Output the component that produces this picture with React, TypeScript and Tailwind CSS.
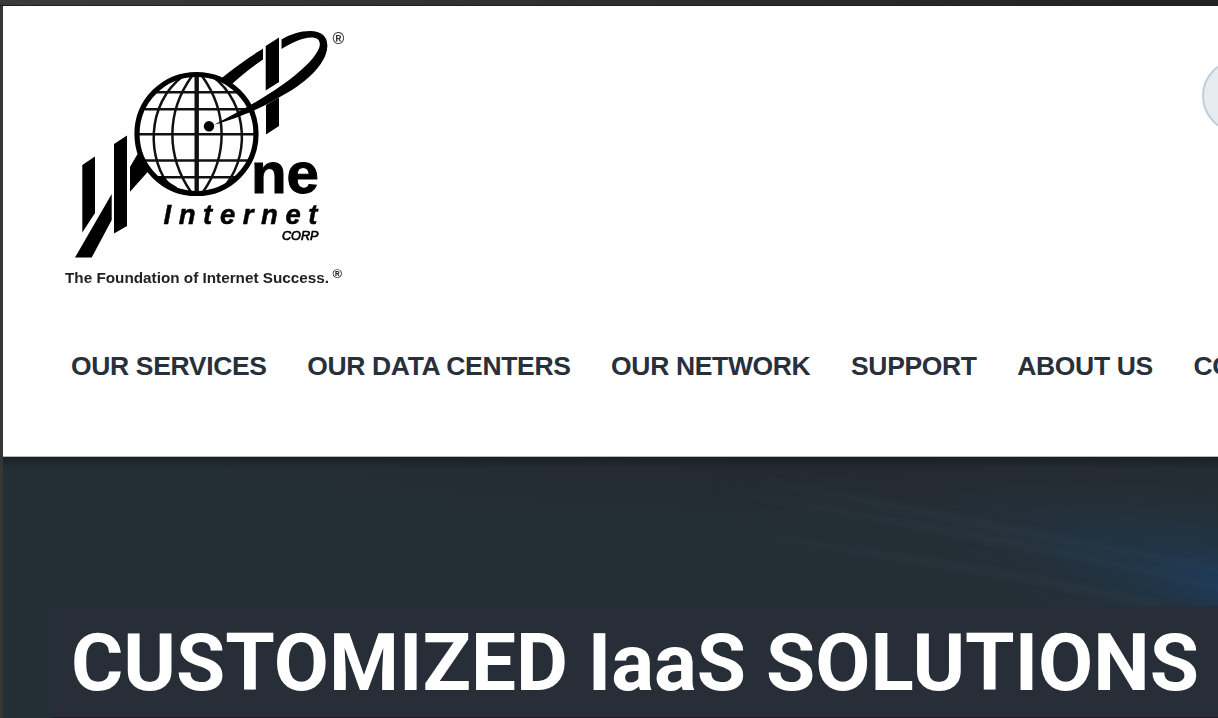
const navItems = [
  "OUR SERVICES",
  "OUR DATA CENTERS",
  "OUR NETWORK",
  "SUPPORT",
  "ABOUT US",
  "CONTACT",
];

function Logo() {
  return (
    <svg
      className="block shrink-0 font-['Liberation_Sans',Arial,sans-serif] blur-[0.7px]"
      width="300"
      height="275"
      viewBox="60 20 300 275"
      role="img"
    >
      <g fill="#000">
        <path d="M82.3 165 95 156.5V213L82.3 232.5Z" />
        <path d="M75 257.5H91.700L111.700 220V194Z" />
        <path d="M114 144 127 135.500V226L114 233.500Z" />
        <path d="M130 167 137.500 154 149 170.500 130 191.700Z" />
      </g>
      <g fill="none" stroke="#111" strokeWidth="2.500">
        <path d="M192 76C166 112 166 156 191 192" />
        <path d="M202 76C228 112 228 156 203 192" />
        <path d="M183 76C146 104 146 160 172 189" />
        <path d="M212 76C250 104 250 160 222 189" />
        <path d="M155 92.300H238M145 109.300H249M136 134.300H257M142 160.500H252M156 177.300H238" />
        <path d="M196.700 74V194" strokeWidth="4.400" />
      </g>
      <circle cx="196.500" cy="134" r="59.500" fill="none" stroke="#000" strokeWidth="5.200" />
      <path d="M156 176C162 182 168 187 177 190L177 187C171 184 166 180 164 176Z" />
      <circle cx="209" cy="126.300" r="5.200" />
      <path d="M265.700 46 279 37.500V82L265.700 90.500Z" />
      <path d="M266 105 279 97.500V126L266 134.500Z" />
      <path d="M220 79.500C234 68 249 57 263 48.800V59.500C252 67 243 74 231 85Z" />
      <path d="M281.500 39.500C291 34 300 31 310 31C322 31 328 37 327.300 47C326 65 305 84 278 98C260 109 240 117 214 124.800C232 115 250 106 267 95C288 82 304 69 313 58C319 50 322 44 318 39.500C311 34 294 41 281.500 49Z" />
      <text x="251" y="192.500" fontSize="57" fontWeight="700" stroke="#000" strokeWidth="1" textLength="68" lengthAdjust="spacingAndGlyphs">ne</text>
      <text x="163.500" y="224" fontSize="27.500" fontWeight="700" fontStyle="italic" stroke="#000" strokeWidth="0.500" textLength="154" lengthAdjust="spacing">Internet</text>
      <text x="282" y="240.300" fontSize="12.800" fontStyle="italic" stroke="#000" strokeWidth="0.700" textLength="36.500" lengthAdjust="spacingAndGlyphs">CORP</text>
      <text x="65" y="282.500" fontSize="15.200" fontWeight="700" fill="#222" textLength="264" lengthAdjust="spacingAndGlyphs">The Foundation of Internet Success.</text>
      <text x="332.500" y="278" fontSize="13" fontWeight="700" fill="#222">®</text>
      <text x="332.500" y="44" fontSize="16" fontWeight="700" fill="#333">®</text>
    </svg>
  );
}

function HeroTexture() {
  return (
    <svg className="absolute inset-0 size-full" viewBox="0 0 1215 261" preserveAspectRatio="none">
      <defs>
        <radialGradient id="blue" gradientUnits="userSpaceOnUse" cx="0" cy="0" r="1" gradientTransform="translate(1245 132) rotate(14) scale(330 85)">
          <stop offset="0" stopColor="#1d3c63" />
          <stop offset="0.350" stopColor="#20374c" stopOpacity="0.750" />
          <stop offset="1" stopColor="#22333f" stopOpacity="0" />
        </radialGradient>
        <radialGradient id="slate" gradientUnits="userSpaceOnUse" cx="0" cy="0" r="1" gradientTransform="translate(830 0) scale(700 75)">
          <stop offset="0" stopColor="#24282f" />
          <stop offset="1" stopColor="#252d33" stopOpacity="0" />
        </radialGradient>
        <linearGradient id="shade" x1="0" y1="0" x2="0" y2="1">
          <stop offset="0" stopColor="#11191d" stopOpacity="0.600" />
          <stop offset="1" stopColor="#11191d" stopOpacity="0" />
        </linearGradient>
        <linearGradient id="streak" gradientUnits="userSpaceOnUse" x1="700" y1="0" x2="1215" y2="0">
          <stop offset="0" stopColor="#3a4c57" stopOpacity="0" />
          <stop offset="0.500" stopColor="#3a4c57" />
          <stop offset="1" stopColor="#3a4c57" stopOpacity="0.600" />
        </linearGradient>
        <filter id="soft" x="-10%" y="-30%" width="120%" height="160%">
          <feGaussianBlur stdDeviation="3.500" />
        </filter>
      </defs>
      <rect width="1215" height="261" fill="url(#slate)" />
      <rect width="1215" height="261" fill="url(#blue)" />
      <g fill="none" stroke="url(#streak)" strokeWidth="5" opacity="0.320" filter="url(#soft)">
        <path d="M700 12C860 44 1050 80 1240 118" />
        <path d="M700 30C880 62 1060 92 1240 136" />
        <path d="M700 70C860 96 1000 112 1160 150" />
      </g>
      <rect width="1215" height="12" fill="url(#shade)" />
    </svg>
  );
}

export default function App() {
  return (
    <div className="flex h-[718px] w-full flex-col overflow-hidden bg-[#363636]">
      <div className="h-[6px] shrink-0 border-b border-[#241c20] bg-linear-to-r from-[#3b3b3b] to-[#222222]" />
      <div className="flex min-h-0 flex-1 flex-col pl-[3px]">
        <header className="flex h-[451px] shrink-0 flex-col border-b border-[#b4b8bb] bg-white">
          <div className="flex h-[289px] shrink-0 items-start justify-between overflow-hidden pt-[14px] pl-[57px]">
            <Logo />
            <div className="mt-[39px] -mr-[200px] h-[74px] w-[216px] shrink-0 rounded-full border-2 border-[#c1ced8] bg-[#e7ecf0]" />
          </div>
          <nav className="mt-[52px] flex gap-[40.6px] overflow-hidden pl-[68px] font-['Liberation_Sans',Arial,sans-serif] text-[26.5px] leading-[38px] font-bold tracking-[-0.35px] whitespace-nowrap text-[#28313b]">
            {navItems.map((item) => (
              <a key={item} className="shrink-0">
                {item}
              </a>
            ))}
          </nav>
        </header>
        <section className="relative flex flex-1 flex-col justify-end overflow-hidden bg-[#242e35]">
          <HeroTexture />
          <div className="relative ml-[48px] h-[112px] shrink-0 border-b border-[#211b2b] bg-[#272e37] pl-[20px]">
            <h1 className="pt-[10px] font-['Roboto',sans-serif] text-[80px] leading-[94px] font-bold whitespace-nowrap text-white">
              CUSTOMIZED IaaS SOLUTIONS
            </h1>
          </div>
        </section>
      </div>
    </div>
  );
}
